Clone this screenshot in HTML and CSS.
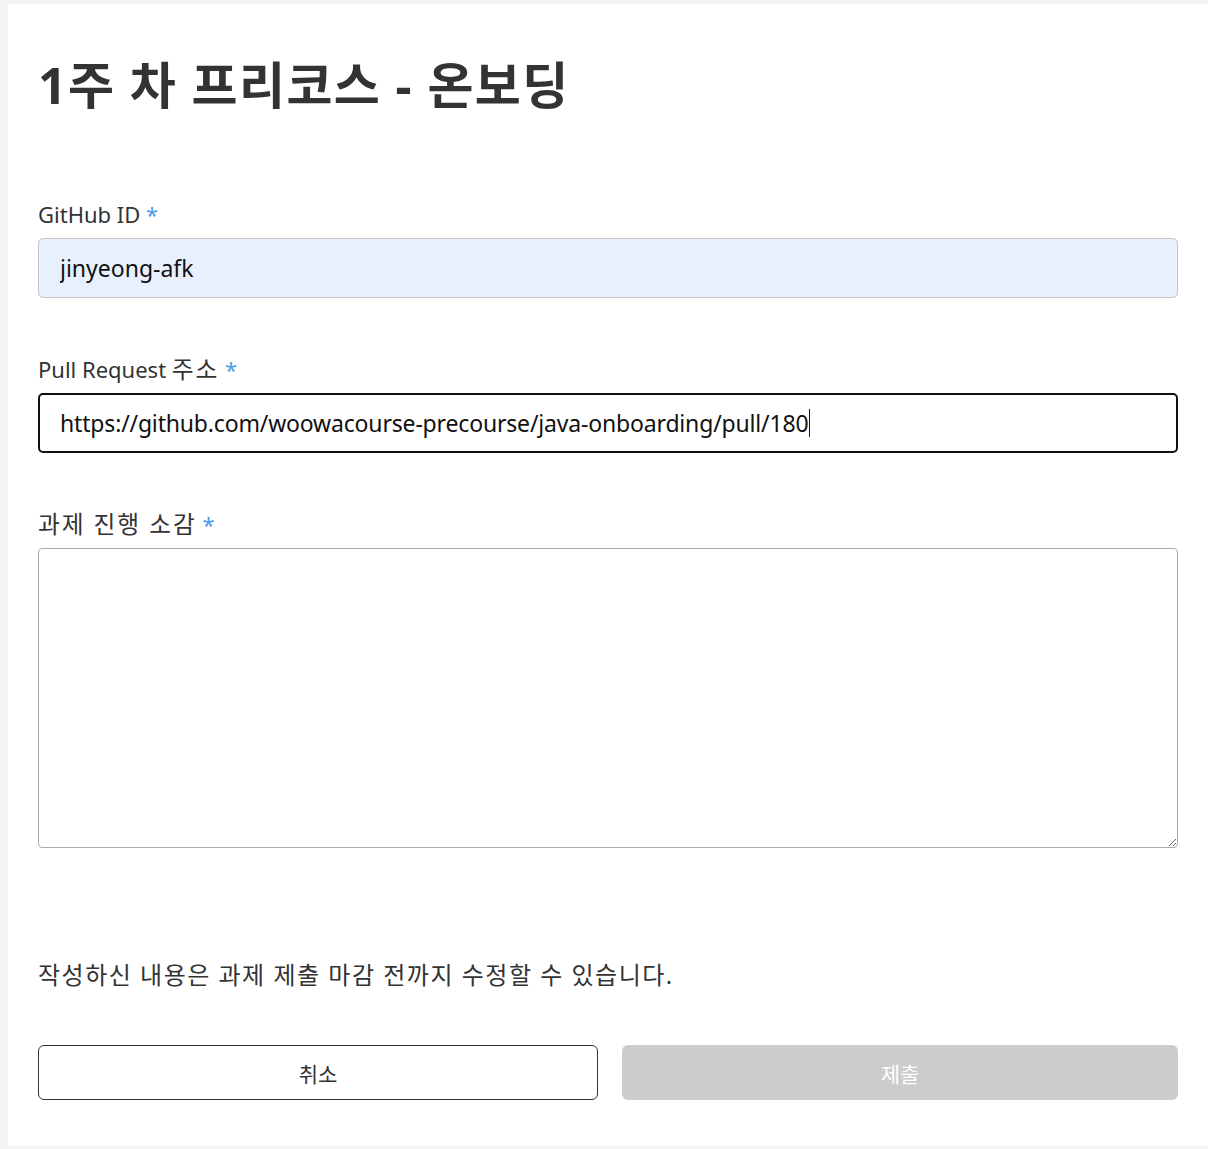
FILE: index.html
```html
<!DOCTYPE html>
<html lang="ko">

<head>
    <meta charset="UTF-8">
    <title>1주 차 프리코스 - 온보딩</title>
    <!-- Styles -->
    <link rel="stylesheet" href="styles.css">
</head>

<body>
    <main class="card">
        <h1 class="title">1주 차 프리코스 - 온보딩</h1>

        <form class="form">
            <div class="field">
                <label class="label" for="github">GitHub ID <span class="required">*</span></label>
                <input class="input input-filled" type="text" id="github" name="github" value="jinyeong-afk">
            </div>

            <div class="field">
                <label class="label" for="pr">Pull Request <span class="ko">주소</span> <span class="required">*</span></label>
                <div class="input input-focus">https://github.com/woowacourse-precourse/java-onboarding/pull/180<span class="caret"></span></div>
            </div>

            <div class="field field-last">
                <label class="label" for="review"><span class="ko">과제 진행 소감</span> <span class="required">*</span></label>
                <textarea class="textarea" id="review" name="review"></textarea>
            </div>

            <p class="note">작성하신 내용은 과제 제출 마감 전까지 수정할 수 있습니다.</p>

            <div class="actions">
                <button type="button" class="btn btn-cancel">취소</button>
                <button type="submit" class="btn btn-submit" disabled>제출</button>
            </div>
        </form>
    </main>
</body>

</html>
```

FILE: styles.css
```css
body {
    margin: 4px 0 0 8px;
    background-color: #f4f4f4;
    font-family: "Noto Sans", "Noto Sans CJK KR", sans-serif;
    color: #333;
}

.card {
    box-sizing: border-box;
    width: 1200px;
    height: 1142px;
    padding: 52px 30px 46px;
    background-color: #fff;
}

.title {
    margin: 0 0 84px;
    font-size: 50px;
    line-height: 58px;
    font-weight: bold;
    letter-spacing: 1.4px;
    color: #333;
}

.form {
    display: flex;
    flex-direction: column;
}

.field {
    display: flex;
    flex-direction: column;
    gap: 7px;
    margin-bottom: 55px;
}

.field-last {
    margin-bottom: 109px;
}

.label {
    font-size: 22px;
    line-height: 33px;
    color: #333;
}

/* hangul runs a bit larger and looser than the latin text */
.ko {
    font-size: 1.08em;
    letter-spacing: 0.08em;
}

.required {
    color: #4b9bea;
}

.input {
    box-sizing: border-box;
    width: 100%;
    height: 60px;
    padding: 0 21px;
    border: 1px solid #c4c4c4;
    border-radius: 5px;
    font-family: inherit;
    font-size: 23px;
    color: #111;
    background-color: #fff;
    display: flex;
    align-items: center;
}

.input-filled {
    background-color: #e8f0fe;
    outline: none;
}

.input-focus {
    border: 2px solid #111;
    padding-left: 20px;
    letter-spacing: -0.17px;
}

.caret {
    display: inline-block;
    width: 1px;
    height: 28px;
    margin-left: 1px;
    background-color: #111;
}

.textarea {
    display: block;
    box-sizing: border-box;
    width: 100%;
    height: 300px;
    padding: 12px 21px;
    border: 1px solid #aaa;
    border-radius: 4px;
    font-family: inherit;
    font-size: 23px;
}

.note {
    margin: 0 0 52px;
    font-size: 24px;
    line-height: 36px;
    letter-spacing: 1.5px;
    color: #333;
}

.actions {
    display: flex;
    gap: 24px;
}

.btn {
    height: 55px;
    border-radius: 6px;
    font-family: inherit;
    font-size: 21px;
}

.btn-cancel {
    flex: 0 0 560px;
    border: 1px solid #333;
    background-color: #fff;
    color: #333;
    cursor: pointer;
}

.btn-submit {
    flex: 1;
    border: none;
    background-color: #ccc;
    color: #fff;
}
```
